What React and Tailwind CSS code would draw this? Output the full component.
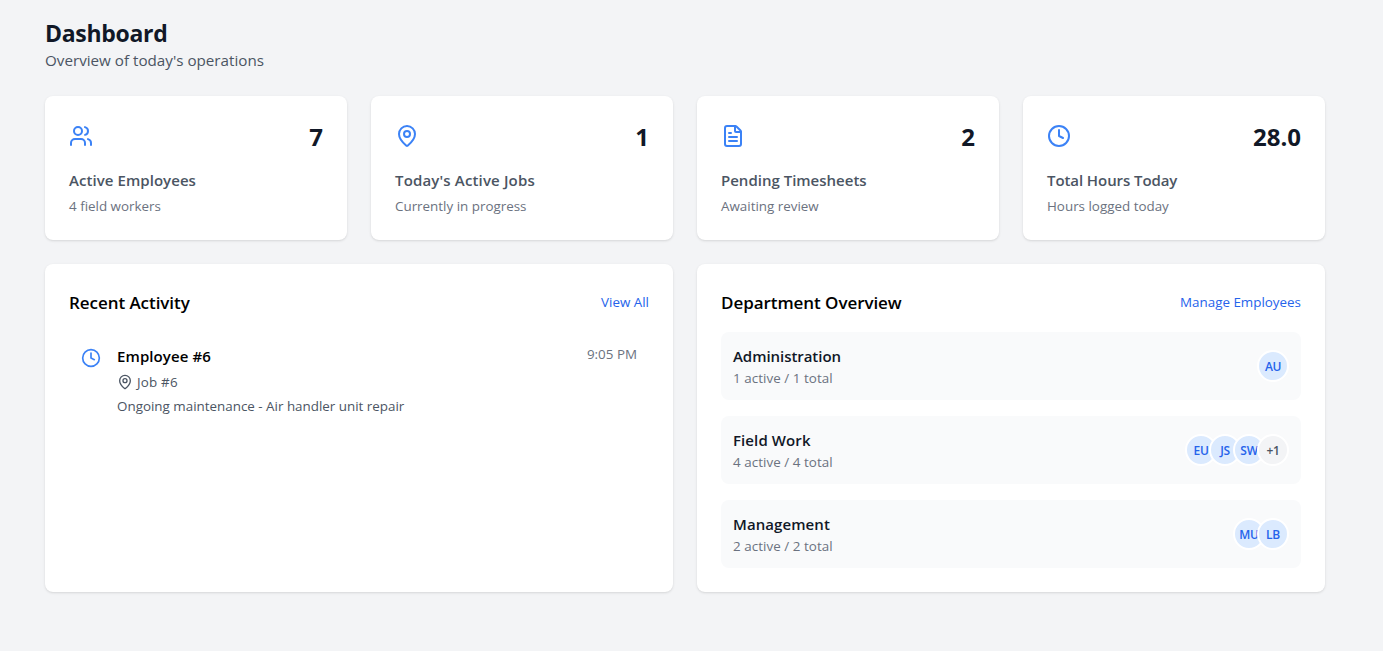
import { Users, MapPin, FileText, Clock } from "lucide-react";

const stats = [
  { icon: Users, value: "7", title: "Active Employees", note: "4 field workers", tracking: "tracking-[0.06px]" },
  { icon: MapPin, value: "1", title: "Today's Active Jobs", note: "Currently in progress", tracking: "tracking-[0.16px]" },
  { icon: FileText, value: "2", title: "Pending Timesheets", note: "Awaiting review", tracking: "tracking-normal" },
  { icon: Clock, value: "28.0", title: "Total Hours Today", note: "Hours logged today", tracking: "tracking-[-0.08px]" },
];

const departments = [
  { name: "Administration", summary: "1 active / 1 total", initials: ["AU"], extra: null, tracking: "tracking-[-0.05px]" },
  { name: "Field Work", summary: "4 active / 4 total", initials: ["EU", "JS", "SW"], extra: "+1", tracking: "tracking-[0.1px]" },
  { name: "Management", summary: "2 active / 2 total", initials: ["MU", "LB"], extra: null, tracking: "tracking-[0.08px]" },
];

const card = "rounded-lg bg-white p-6 shadow-sm";

function StatCard({ icon: Icon, value, title, note, tracking }) {
  return (
    <div className={card}>
      <div className="flex items-center justify-between">
        <Icon className="size-6 text-[#3b82f6]" />
        <span className="pt-0.5 text-[24px] leading-[30px] font-bold text-[#111827]">{value}</span>
      </div>
      <h3 className={`mt-4 text-[15px] leading-6 font-semibold text-[#4b5563] ${tracking}`}>{title}</h3>
      <p className="mt-1 text-[13.4px] leading-5 text-[#6b7280]">{note}</p>
    </div>
  );
}

function PanelHeader({ title, link }) {
  return (
    <div className="mb-4 flex items-center justify-between">
      <h2 className="pt-0.5 text-[17px] leading-[26px] font-semibold tracking-[-0.06px] text-black">{title}</h2>
      <a className="text-[13.4px] leading-5 text-[#2563eb]">{link}</a>
    </div>
  );
}

export default function App() {
  return (
    <div className="min-h-screen bg-[#f3f4f6] pr-[13px] font-['Open_Sans',sans-serif]">
      <main className="mx-auto w-[1280px] pt-4">
        <header className="mb-6">
          <h1 className="pt-0.5 text-[23px] leading-[30px] font-bold tracking-[-0.3px] text-[#111827]">Dashboard</h1>
          <p className="text-[15.2px] leading-6 text-[#4b5563]">Overview of today's operations</p>
        </header>

        <section className="mb-6 grid grid-cols-4 gap-6">
          {stats.map((s) => (
            <StatCard key={s.title} {...s} />
          ))}
        </section>

        <section className="grid grid-cols-2 gap-6">
          <div className={card}>
            <PanelHeader title="Recent Activity" link="View All" />
            <div className="flex items-start gap-4 p-3">
              <Clock className="mt-1 size-5 text-[#3b82f6]" />
              <div className="flex-1">
                <h3 className="text-[15px] leading-6 font-semibold tracking-[0.1px] text-black">Employee #6</h3>
                <div className="mt-1 flex items-center gap-1 text-[13.4px] leading-5 text-[#4b5563]">
                  <MapPin className="size-4" />
                  <span className="tracking-[0.2px]">Job #6</span>
                </div>
                <p className="mt-1 text-[13.4px] leading-5 text-[#4b5563]">
                  Ongoing maintenance - Air handler unit repair
                </p>
              </div>
              <span className="text-[13.4px] leading-5 text-[#6b7280]">9:05 PM</span>
            </div>
          </div>

          <div className={card}>
            <PanelHeader title="Department Overview" link="Manage Employees" />
            <div className="flex flex-col gap-4">
              {departments.map((d) => (
                <div key={d.name} className="flex items-center justify-between rounded-lg bg-[#f9fafb] p-3">
                  <div>
                    <h3 className={`text-[15px] leading-6 font-semibold text-[#111827] ${d.tracking}`}>{d.name}</h3>
                    <p className="text-[13.4px] leading-5 tracking-[0.05px] text-[#6b7280]">{d.summary}</p>
                  </div>
                  <div className="flex -space-x-2">
                    {d.initials.map((i) => (
                      <div
                        key={i}
                        className="flex size-8 items-center justify-center rounded-full border-2 border-white bg-[#dbeafe] pt-px text-[12px] leading-4 font-semibold tracking-[-0.3px] text-[#2563eb]"
                      >
                        {i}
                      </div>
                    ))}
                    {d.extra && (
                      <div className="flex size-8 items-center justify-center rounded-full border-2 border-white bg-[#f3f4f6] pt-px text-[12px] leading-4 font-semibold tracking-[-0.3px] text-[#4b5563]">
                        {d.extra}
                      </div>
                    )}
                  </div>
                </div>
              ))}
            </div>
          </div>
        </section>
      </main>
    </div>
  );
}
